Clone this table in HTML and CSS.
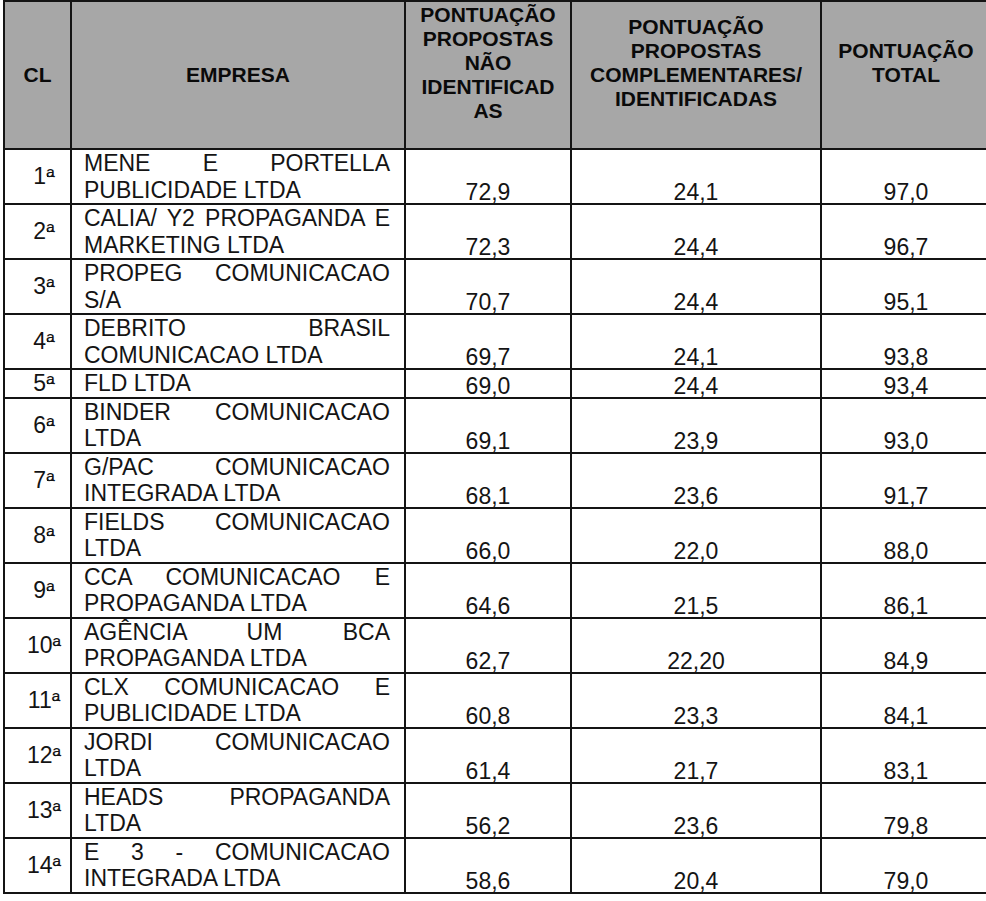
FILE: index.html
```html
<!DOCTYPE html>
<html lang="pt">
<head>
<meta charset="utf-8">
<title>Classificação</title>
<link rel="stylesheet" href="styles.css">
</head>
<body>
<table class="rank">
  <colgroup>
    <col class="c-cl">
    <col class="c-emp">
    <col class="c-nao">
    <col class="c-comp">
    <col class="c-tot">
  </colgroup>
  <thead>
    <tr class="head">
      <th>CL</th>
      <th>EMPRESA</th>
      <th class="lift">PONTUAÇÃO<br>PROPOSTAS<br>NÃO<br>IDENTIFICAD<br>AS</th>
      <th class="lift">PONTUAÇÃO<br>PROPOSTAS<br>COMPLEMENTARES/<br>IDENTIFICADAS</th>
      <th class="lift">PONTUAÇÃO<br>TOTAL</th>
    </tr>
  </thead>
  <tbody>
    <tr><td class="cl">1<span class="ord">ª</span></td><td class="emp"><span class="l1">MENE E PORTELLA</span><span class="l2">PUBLICIDADE LTDA</span></td><td class="num">72,9</td><td class="num">24,1</td><td class="num">97,0</td></tr>
    <tr><td class="cl">2<span class="ord">ª</span></td><td class="emp"><span class="l1">CALIA/ Y2 PROPAGANDA E</span><span class="l2">MARKETING LTDA</span></td><td class="num">72,3</td><td class="num">24,4</td><td class="num">96,7</td></tr>
    <tr><td class="cl">3<span class="ord">ª</span></td><td class="emp"><span class="l1">PROPEG COMUNICACAO</span><span class="l2">S/A</span></td><td class="num">70,7</td><td class="num">24,4</td><td class="num">95,1</td></tr>
    <tr><td class="cl">4<span class="ord">ª</span></td><td class="emp"><span class="l1">DEBRITO BRASIL</span><span class="l2">COMUNICACAO LTDA</span></td><td class="num">69,7</td><td class="num">24,1</td><td class="num">93,8</td></tr>
    <tr><td class="cl">5<span class="ord">ª</span></td><td class="emp"><span class="l2">FLD LTDA</span></td><td class="num">69,0</td><td class="num">24,4</td><td class="num">93,4</td></tr>
    <tr><td class="cl">6<span class="ord">ª</span></td><td class="emp"><span class="l1">BINDER COMUNICACAO</span><span class="l2">LTDA</span></td><td class="num">69,1</td><td class="num">23,9</td><td class="num">93,0</td></tr>
    <tr><td class="cl">7<span class="ord">ª</span></td><td class="emp"><span class="l1">G/PAC COMUNICACAO</span><span class="l2">INTEGRADA LTDA</span></td><td class="num">68,1</td><td class="num">23,6</td><td class="num">91,7</td></tr>
    <tr><td class="cl">8<span class="ord">ª</span></td><td class="emp"><span class="l1">FIELDS COMUNICACAO</span><span class="l2">LTDA</span></td><td class="num">66,0</td><td class="num">22,0</td><td class="num">88,0</td></tr>
    <tr><td class="cl">9<span class="ord">ª</span></td><td class="emp"><span class="l1">CCA COMUNICACAO E</span><span class="l2">PROPAGANDA LTDA</span></td><td class="num">64,6</td><td class="num">21,5</td><td class="num">86,1</td></tr>
    <tr><td class="cl">10<span class="ord">ª</span></td><td class="emp"><span class="l1">AGÊNCIA UM BCA</span><span class="l2">PROPAGANDA LTDA</span></td><td class="num">62,7</td><td class="num">22,20</td><td class="num">84,9</td></tr>
    <tr><td class="cl">11<span class="ord">ª</span></td><td class="emp"><span class="l1">CLX COMUNICACAO E</span><span class="l2">PUBLICIDADE LTDA</span></td><td class="num">60,8</td><td class="num">23,3</td><td class="num">84,1</td></tr>
    <tr><td class="cl">12<span class="ord">ª</span></td><td class="emp"><span class="l1">JORDI COMUNICACAO</span><span class="l2">LTDA</span></td><td class="num">61,4</td><td class="num">21,7</td><td class="num">83,1</td></tr>
    <tr><td class="cl">13<span class="ord">ª</span></td><td class="emp"><span class="l1">HEADS PROPAGANDA</span><span class="l2">LTDA</span></td><td class="num">56,2</td><td class="num">23,6</td><td class="num">79,8</td></tr>
    <tr><td class="cl">14<span class="ord">ª</span></td><td class="emp"><span class="l1">E 3 - COMUNICACAO</span><span class="l2">INTEGRADA LTDA</span></td><td class="num">58,6</td><td class="num">20,4</td><td class="num">79,0</td></tr>
  </tbody>
</table>
</body>
</html>
```
FILE: styles.css
```css
html, body {
  margin: 0;
  padding: 0;
  background: #ffffff;
  overflow: hidden;
}

body {
  width: 986px;
  height: 901px;
  font-family: "Liberation Sans", Arial, sans-serif;
  color: #141414;
}

.rank {
  border-collapse: collapse;
  table-layout: fixed;
  width: 987px;
  margin-left: 3px;
  font-size: 23px;
}

.c-cl { width: 67px; }
.c-emp { width: 334px; }
.c-nao { width: 166px; }
.c-comp { width: 250px; }
.c-tot { width: 170px; }

.rank th,
.rank td {
  border: 2px solid #141414;
  padding: 0;
}

.head {
  height: 148px;
}

.rank .head th {
  background: #a7a7a7;
  color: #0a0a0a;
  font-size: 21px;
  font-weight: bold;
  line-height: 24px;
  text-align: center;
  vertical-align: middle;
  white-space: nowrap;
}

.rank .head th.lift {
  padding-bottom: 24px;
}

.rank td.cl {
  text-align: center;
  vertical-align: middle;
  padding-left: 13px;
  line-height: 26.5px;
  white-space: nowrap;
}

.ord {
  position: relative;
}

.ord::after {
  content: "";
  position: absolute;
  left: 1px;
  right: 1px;
  bottom: 12px;
  border-bottom: 1.5px solid #141414;
}

.rank td.emp {
  padding: 0 14px 0 12px;
  line-height: 26.5px;
  vertical-align: bottom;
}

.l1,
.l2 {
  display: block;
  white-space: nowrap;
}

.l1 {
  white-space: normal;
  text-align: justify;
  text-align-last: justify;
}

.l2 {
  text-align: left;
}

.rank td.num {
  text-align: center;
  vertical-align: bottom;
  line-height: 22px;
}
```
